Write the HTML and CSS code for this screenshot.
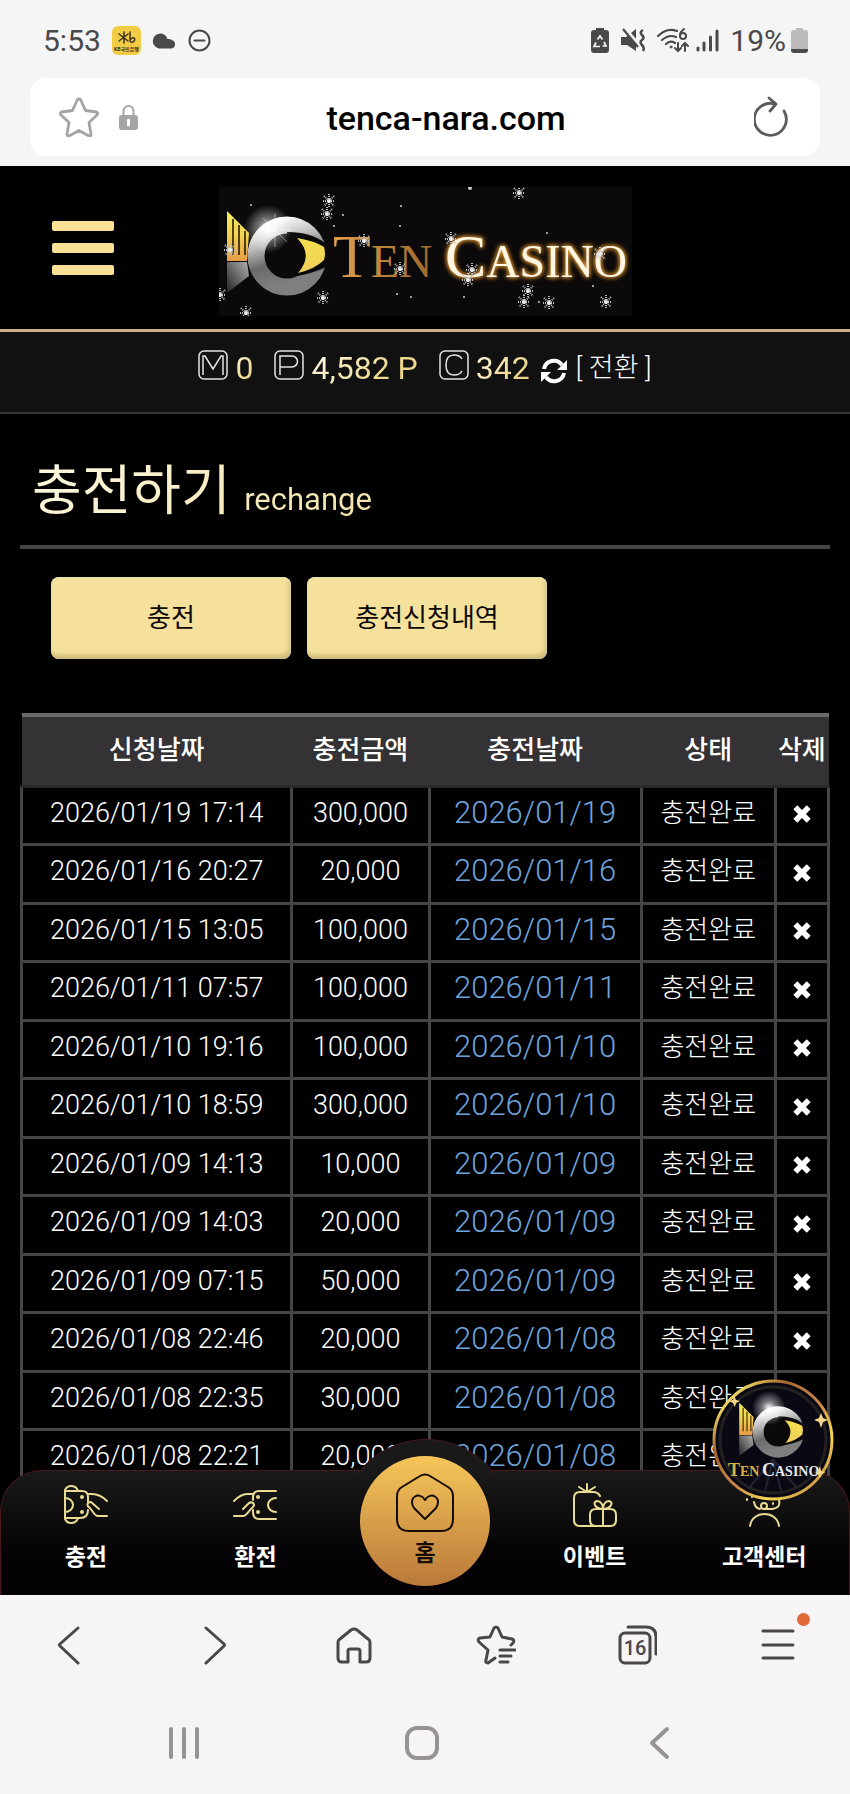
FILE: index.html
```html
<!DOCTYPE html>
<html lang="ko">
<head>
  <meta charset="UTF-8" />
  <meta name="viewport" content="width=device-width, initial-scale=1.0" />
  <title>TEN CASINO - 충전하기</title>
  <link rel="stylesheet" href="styles.css">
</head>
<body>

  <!-- status bar -->
  <div class="status-bar">
    <div class="status-left">
      <span class="clock">5:53</span>
      <svg width="29" height="29" viewBox="0 0 29 29">
        <rect width="29" height="29" rx="6" fill="#f3cc46" />
        <path d="M12 6v11M7 8l9 7M16 8l-9 7M18 6v8q0 3 3 2q3-2 1-4q-2-1-4 2" fill="none" stroke="#3a3222" stroke-width="1.5" stroke-linecap="round" />
        <text x="14.5" y="25" class="kb-text">KB국민은행</text>
      </svg>
      <svg width="25" height="17" viewBox="0 0 25 17"><path d="M7 16.500a7.500 7.500 0 1 1 8.500-9.500a6 6 0 0 1 4.500 1a4.500 4.500 0 0 1 0 8.500z" fill="#4a484a" /></svg>
      <svg class="dnd" width="23" height="23" viewBox="0 0 23 23" fill="none" stroke="#4a484a" stroke-width="2"><circle cx="11.500" cy="11.500" r="10" /><path d="M6.500 11.500h10" stroke-linecap="round" /></svg>
    </div>
    <div class="status-right">
      <svg width="18" height="25" viewBox="0 0 18 25">
        <path d="M5 0h8v2h2q3 0 3 3v17q0 3-3 3H3q-3 0-3-3V5q0-3 3-3h2z" fill="#4a484a" />
        <path d="M6.500 11.500L9 8l2.500 3.500M13 14l2 4h-3.500M9 18.500H3l2-4" fill="none" stroke="#f5f5f5" stroke-width="1.700" />
      </svg>
      <svg width="26" height="25" viewBox="0 0 26 25">
        <path d="M1 9h5L16 1v22L7 17H1z" fill="#4a484a" />
        <path d="M5 0l14 17" stroke="#f5f5f5" stroke-width="3" />
        <path d="M3 1l15 18" stroke="#4a484a" stroke-width="2.200" />
        <path d="M23 2q-4 2-1 5t0 5t0 5t1 6" fill="none" stroke="#4a484a" stroke-width="2.500" />
      </svg>
      <svg class="wifi" width="32" height="25" viewBox="0 0 32 25" fill="none" stroke="#4a484a" stroke-width="2.200" stroke-linecap="round">
        <path d="M1 8Q10-1 20 3M5 12q7-6 14-3M9 16q4-4 9-1" />
        <circle cx="14" cy="19" r="1" fill="#4a484a" stroke-width="1" />
        <circle cx="26" cy="8" r="3" stroke-width="2" /><path d="M27 1q-4 3-4 6" stroke-width="2" />
        <path d="M21 15v8M18 20l3 3 3-3M28 23v-8M25 18l3-3 3 3" stroke-width="2" />
      </svg>
      <svg width="23" height="23" viewBox="0 0 23 23" stroke="#4a484a" stroke-width="3" stroke-linecap="round"><path d="M2 19v2M8 14v7M14.500 8v13M21 2v19" /></svg>
      <span class="battery-text">19%</span>
      <svg width="17" height="25" viewBox="0 0 17 25"><path d="M5 0h7v2h2q3 0 3 3v16H0V5q0-3 3-3h2z" fill="#bcbabc" /><path d="M0 21h17v1q0 3-3 3H3q-3 0-3-3z" fill="#4a484a" /></svg>
    </div>
  </div>

  <!-- address bar -->
  <div class="address-bar">
    <button class="plain" aria-label="북마크"><svg width="40" height="40" viewBox="0 0 40 40" fill="none" stroke="#a5a3a5" stroke-width="2.800" stroke-linejoin="round"><path d="M20 2q1.500 0 2 1.500l4.500 10 11 1.500q2 1 .5 3l-8 7.500 2 12q0 2-2 1.500L20 33.500 10 39q-2 0-2-2l2-11.500L2 18q-1.500-2 .5-3l11-1.500L18 3.500Q18.500 2 20 2z" /></svg></button>
    <svg class="lock" width="19" height="26" viewBox="0 0 19 26"><path d="M4.500 12V7a5 5 0 0 1 10 0v5" fill="none" stroke="#a5a3a5" stroke-width="2" /><rect y="11" width="19" height="15" rx="3" fill="#a5a3a5" /><path d="M9.500 16v5" stroke="#fff" stroke-width="3" stroke-linecap="round" /></svg>
    <input type="text" class="url" aria-label="주소" value="tenca-nara.com" />
    <button class="plain" aria-label="새로고침"><svg width="36" height="42" viewBox="0 0 36 42" fill="none" stroke="#5c5a5c" stroke-width="2.800" stroke-linecap="round" stroke-linejoin="round"><path d="M30 15A16 16 0 1 1 21 8M15 2l7 6-6 7" /></svg></button>
  </div>

  <!-- site -->
  <div class="site">
    <header class="header">
      <button class="menu-btn" aria-label="메뉴"><span></span><span></span><span></span></button>
      <a href="#" class="logo" aria-label="TEN CASINO">
        <svg width="413" height="129" viewBox="0 0 413 129">
          <defs>
            <linearGradient id="fin" x1="0" y1="0" x2="0" y2="1"><stop offset="0" stop-color="#f5ee62" /><stop offset=".5" stop-color="#f2d24e" /><stop offset="1" stop-color="#e89a45" /></linearGradient>
            <linearGradient id="eye" x1="0" y1="0" x2="0" y2="1"><stop offset="0" stop-color="#f5e04e" /><stop offset="1" stop-color="#f0cf5c" /></linearGradient>
            <linearGradient id="ring" x1="0" y1="0" x2=".3" y2="1"><stop offset="0" stop-color="#fff" /><stop offset=".35" stop-color="#bbb" /><stop offset=".65" stop-color="#6a6a6a" /><stop offset="1" stop-color="#7f7f7f" /></linearGradient>
            <linearGradient id="tail" x1="1" y1="0" x2="0" y2="1"><stop offset="0" stop-color="#b0b0b0" /><stop offset="1" stop-color="#222" /></linearGradient>
            <linearGradient id="ten" x1="0" y1="0" x2="1" y2="0"><stop offset="0" stop-color="#e0a04c" /><stop offset="1" stop-color="#9c682c" /></linearGradient>
            <radialGradient id="shine"><stop offset="0" stop-color="#fff" /><stop offset=".4" stop-color="#fff" stop-opacity=".45" /><stop offset="1" stop-color="#fff" stop-opacity="0" /></radialGradient>
            <g id="fish">
              <path d="M8 24l22 22-2 28H8z" fill="url(#fin)" />
              <path d="M14 32v36M20 38v30M26 44v24" stroke="#2a1c08" stroke-width="1.600" />
              <path d="M8 75h20l2 14-22 17z" fill="url(#tail)" />
              <circle cx="68" cy="69" r="31" fill="#0b090a" stroke="url(#ring)" stroke-width="17" />
              <path d="M68 45q24 0 38 11l3 2v18l-4 5Q94 86 78 89z" fill="#0b090a" />
              <path d="M78 51q18 3 27 9 2 7 0 13-9 9-26 13 16-18-1-35z" fill="url(#eye)" />
            </g>
            <g id="flake">
              <path d="M0-7V7M-6 0H6M-5-5L5 5M5-5L-5 5" stroke="#bbb" stroke-width="2" stroke-dasharray="1 1" />
              <circle r="2" fill="#eee" />
            </g>
          </defs>
          <rect width="413" height="129" fill="#0b090a" />
          <use href="#fish" />
          <circle cx="49" cy="42" r="24" fill="url(#shine)" />
          <path d="M56 26v34M39 43h34M44 31l24 24M68 31L44 55" stroke="#fff" stroke-width=".600" opacity=".7" />
          <text x="114" y="90" class="logo-text" fill="url(#ten)"><tspan class="cap">T</tspan>EN</text>
          <text x="226" y="90" class="logo-text glow"><tspan class="cap">C</tspan>ASINO</text>
          <use href="#flake" x="110" y="14" /><use href="#flake" x="108" y="27" />
          <use href="#flake" x="145" y="54" /><use href="#flake" x="181" y="82" />
          <use href="#flake" x="104" y="111" /><use href="#flake" x="27" y="126" />
          <use href="#flake" x="11" y="63" /><use href="#flake" x="1" y="108" />
          <use href="#flake" x="253" y="83" /><use href="#flake" x="249" y="93" />
          <use href="#flake" x="232" y="52" /><use href="#flake" x="300" y="6" />
          <use href="#flake" x="309" y="104" /><use href="#flake" x="305" y="115" />
          <use href="#flake" x="330" y="116" /><use href="#flake" x="387" y="115" />
          <use href="#flake" x="381" y="67" />
          <g fill="#ccc"><circle cx="32" cy="18" r="1" /><circle cx="124" cy="28" r="1" /><circle cx="115" cy="39" r="1" /><circle cx="182" cy="19" r="1" /><circle cx="181" cy="39" r="1" /><circle cx="328" cy="46" r="1" /><circle cx="178" cy="107" r="1" /><circle cx="192" cy="110" r="1" /><circle cx="245" cy="110" r="1" /><circle cx="320" cy="115" r="1" /><circle cx="374" cy="99" r="1" /><circle cx="251" cy="1" r="2" /></g>
        </svg>
      </a>
    </header>

    <div class="balance">
      <div class="balance-item">
        <svg width="30" height="30" viewBox="0 0 30 30"><rect x="1" y="1" width="28" height="28" rx="5" /><path d="M5 25V6h2l8 13 8-13h2v19" /></svg>
        <span>0</span>
      </div>
      <div class="balance-item">
        <svg width="30" height="30" viewBox="0 0 30 30"><rect x="1" y="1" width="28" height="28" rx="5" /><path d="M6 25V6h12a5 5 0 0 1 0 11H6" /></svg>
        <span>4,582 P</span>
      </div>
      <div class="balance-item">
        <svg width="30" height="30" viewBox="0 0 30 30"><rect x="1" y="1" width="28" height="28" rx="5" /><path d="M23 9q-2-4-8-4-8 0-8 10t8 10q6 0 8-4" /></svg>
        <span>342</span>
      </div>
      <button class="plain convert">
        <svg width="26" height="26" viewBox="0 0 26 26" fill="none" stroke="#fff" stroke-width="4"><path d="M3 11A10 10 0 0 1 21 7M23 15A10 10 0 0 1 5 19" /><path d="M26 2v10H16zM0 24V14h10z" fill="#fff" stroke="none" /></svg>
        [ 전환 ]
      </button>
    </div>

    <main class="content">
      <h1 class="title">충전하기 <small>rechange</small></h1>

      <div class="tabs">
        <button>충전</button>
        <button>충전신청내역</button>
      </div>

      <table class="history">
        <thead>
          <tr>
            <th class="col-request">신청날짜</th>
            <th class="col-amount">충전금액</th>
            <th class="col-date">충전날짜</th>
            <th class="col-state">상태</th>
            <th class="col-delete">삭제</th>
          </tr>
        </thead>
        <tbody id="historyBody"></tbody>
      </table>
    </main>

    <nav class="bottom-nav">
      <a href="#">
        <svg width="44" height="44" viewBox="0 0 44 44"><path d="M14 8a7 7 0 0 0-13-1v29a7 7 0 0 0 13-1M1 8h17q6 0 6 6v6M1 35h15q8 0 8-8M1 15a8 7 0 0 1 0 14M24 11h4c7 0 11 3 15 7M43 33h-9c-4 0-6-7-10-10M35 26l-8-7c-4 0-5 4-1 6" /><circle cx="18" cy="14" r="1" /><circle cx="18" cy="29" r="1" /></svg>
        충전
      </a>
      <a href="#">
        <svg width="44" height="44" viewBox="0 0 44 44"><path d="M43 8H26q-6 0-6 6v3M43 36H26q-6 0-6-7v-2M43 15a8 7 0 0 0 0 14M1 18c4-4 8-7 13-7h6M1 33h9c4 0 6-6 10-9M10 26l6-6c4-2 7 2 3 5" /><circle cx="25" cy="14" r="1" /><circle cx="25" cy="29" r="1" /></svg>
        환전
      </a>
      <a href="#" class="home">
        <svg width="60" height="60" viewBox="0 0 60 60"><path d="M25 3q5-3 10 0l18 11q5 3 5 9v23q0 12-12 12H14Q2 58 2 46V23q0-6 5-9zM30 46L19 35c-7-11 6-17 11-8 5-9 18-3 11 8z" /></svg>
        홈
      </a>
      <a href="#">
        <svg width="44" height="44" viewBox="0 0 44 44"><path d="M27 13q-2-4-7-4H7q-6 0-6 6v22q0 6 6 6h30q6 0 6-6v-5q0-6-6-6H23q-6 0-6 6v5q0 6 6 6M30 26v17M30 26c-8 0-11-7-6-8 4 0 6 4 6 8 0-4 2-8 6-8 5 1 2 8-6 8M14 1v8M6 4l8 5M22 4l-8 5" /></svg>
        이벤트
      </a>
      <a href="#">
        <svg width="44" height="44" viewBox="0 0 44 44"><path d="M8 43c2-16 27-16 29 0M10 14v-2a12 12 0 0 1 24 0v2M12 19q1 6 6 7M37 17q2 8-7 9h-8" /><circle cx="22" cy="23" r="3" /><path d="M31 20v1M5 16v1" /></svg>
        고객센터
      </a>
    </nav>

    <a href="#" class="badge" aria-label="TEN CASINO">
      <svg width="122" height="122" viewBox="0 0 122 122">
        <defs>
          <linearGradient id="rim" x1="0" y1="0" x2="1" y2="1"><stop offset="0" stop-color="#8d5a2c" /><stop offset=".12" stop-color="#f7e468" /><stop offset=".3" stop-color="#a8662f" /><stop offset=".55" stop-color="#c98a4a" /><stop offset=".72" stop-color="#f6d858" /><stop offset="1" stop-color="#b36c36" /></linearGradient>
        </defs>
        <circle cx="61" cy="61" r="59" fill="#0a0913" stroke="url(#rim)" stroke-width="3" />
        <circle cx="61" cy="61" r="53" fill="none" stroke="#232022" stroke-width="3" />
        <path d="M61 80L38 108M61 80l-8 32M61 80l8 32M61 80l23 28" stroke="#6b7196" stroke-width="2" opacity=".25" />
        <svg x="22" y="8" width="84" height="84" viewBox="0 0 129 129"><use href="#fish" /></svg>
        <circle cx="57" cy="29" r="17" fill="url(#shine)" />
        <text x="16" y="97" class="badge-text" fill="#d8b247"><tspan class="cap">T</tspan>EN</text>
        <text x="50" y="97" class="badge-text" fill="#e8e8ee"><tspan class="cap">C</tspan>ASINO</text>
        <path d="M109 34l2 5 5 2-5 2-2 6-2-6-5-2 5-2zM22 16l2 5 4 1-4 2-1 4-2-4-4-2 4-1zM108 87l1 5 5 1-5 2-1 4-2-4-3-2 3-1z" fill="#f8d888" />
      </svg>
    </a>
  </div>

  <!-- browser toolbar -->
  <div class="toolbar">
    <button class="plain" aria-label="뒤로"><svg width="40" height="40" viewBox="0 0 40 40"><path d="M26 3L8 19q-1 1 0 2l18 17" /></svg></button>
    <button class="plain" aria-label="앞으로"><svg width="40" height="40" viewBox="0 0 40 40"><path d="M13 3l18 16q1 1 0 2L13 38" /></svg></button>
    <button class="plain" aria-label="홈"><svg width="40" height="40" viewBox="0 0 40 40"><path d="M17 5q3-2 6 0l11 9q2 1 2 4v15q0 4-4 4h-6V26q0-2-2-2h-8q-2 0-2 2v11H8q-4 0-4-4V18q0-3 2-4z" /></svg></button>
    <button class="plain" aria-label="북마크 목록"><svg width="40" height="40" viewBox="0 0 40 40"><path d="M19 33l-7 5q-3 0-2-3l2-10-9-8q-2-3 1-4l10-1 4-9q2-2 4 0l4 9 10 2q3 1 1 4l-2 2M24 25h15M24 31h11M24 37h8" /></svg></button>
    <button class="plain" aria-label="탭 16개"><svg width="40" height="40" viewBox="0 0 40 40"><path d="M11 2h18q10 0 10 10v17" /><rect x="3" y="8" width="30" height="30" rx="5" /><text x="18" y="30" class="tab-count">16</text></svg></button>
    <button class="plain more" aria-label="메뉴 더보기"><svg width="40" height="40" viewBox="0 0 40 40"><path d="M5 6h30M5 20h30M5 33h30" /></svg></button>
  </div>

  <!-- system navigation -->
  <div class="system-nav">
    <button class="plain" aria-label="최근 앱"><svg width="36" height="36" viewBox="0 0 36 36"><path d="M5 4v28M18 4v28M31 4v28" /></svg></button>
    <button class="plain" aria-label="홈 화면"><svg width="36" height="36" viewBox="0 0 36 36"><rect x="3" y="3" width="30" height="30" rx="10" /></svg></button>
    <button class="plain" aria-label="이전"><svg width="36" height="36" viewBox="0 0 36 36"><path d="M25 4L10 18l15 14" /></svg></button>
  </div>

  <script>
    const rows = [
      ["2026/01/19 17:14", "300,000"],
      ["2026/01/16 20:27", "20,000"],
      ["2026/01/15 13:05", "100,000"],
      ["2026/01/11 07:57", "100,000"],
      ["2026/01/10 19:16", "100,000"],
      ["2026/01/10 18:59", "300,000"],
      ["2026/01/09 14:13", "10,000"],
      ["2026/01/09 14:03", "20,000"],
      ["2026/01/09 07:15", "50,000"],
      ["2026/01/08 22:46", "20,000"],
      ["2026/01/08 22:35", "30,000"],
      ["2026/01/08 22:21", "20,000"]
    ];

    document.getElementById("historyBody").innerHTML = rows.map(([requested, amount]) => `
      <tr>
        <td>${requested}</td>
        <td>${amount}</td>
        <td class="date">${requested.split(" ")[0]}</td>
        <td class="state">충전완료</td>
        <td><button class="plain" aria-label="삭제"><svg width="20" height="20" viewBox="0 0 18 18"><path d="M3 3l12 12M15 3L3 15" stroke="#fff" stroke-width="5" /></svg></button></td>
      </tr>`).join("");
  </script>

</body>
</html>
```
FILE: styles.css
```css
* { margin: 0; padding: 0; box-sizing: border-box; }
body {
  font-family: Roboto, "Noto Sans CJK KR", sans-serif;
  background-color: #f5f5f5;
  height: 100vh;
  display: flex;
  flex-direction: column;
}
svg { display: block; flex-shrink: 0; }
a { color: inherit; text-decoration: none; }
.plain {
  background: none;
  border: none;
  color: inherit;
  font: inherit;
  cursor: pointer;
}

/* status bar */
.status-bar {
  height: 78px;
  padding: 2px 42px 0 43px;
  display: flex;
  justify-content: space-between;
  align-items: center;
  color: #4a484a;
  font-size: 30px;
}
.status-left,
.status-right {
  display: flex;
  align-items: center;
  gap: 11px;
}
.wifi { margin-right: -4px; }
.battery-text { margin-right: -6px; }
.kb-text {
  font-size: 5px;
  font-weight: bold;
  text-anchor: middle;
  fill: #3a3222;
}

/* address bar */
.address-bar {
  height: 78px;
  margin: 0 30px 10px;
  padding: 0 30px 0 29px;
  border-radius: 16px;
  background-color: #fff;
  display: flex;
  align-items: center;
}
.lock { margin-left: 20px; }
.url {
  flex: 1;
  min-width: 0;
  padding-top: 2px;
  border: none;
  outline: none;
  background: none;
  text-align: center;
  font-family: inherit;
  font-size: 34px;
  font-weight: 500;
}

/* site */
.site {
  flex: 1;
  min-height: 0;
  overflow: hidden;
  position: relative;
  background-color: #000;
  color: #fff;
}
.header {
  height: 166px;
  padding: 0 52px;
  display: grid;
  grid-template-columns: 1fr auto 1fr;
  align-items: center;
  border-bottom: 3px solid #c9b184;
  background-color: #000;
}
.menu-btn {
  width: 62px;
  display: flex;
  flex-direction: column;
  gap: 12px;
  background: none;
  border: none;
  cursor: pointer;
}
.menu-btn span {
  height: 10px;
  border-radius: 2px;
  background-color: #f8e197;
}
.logo { margin-top: 8px; }
.logo-text {
  font-family: "Liberation Serif", serif;
  font-size: 46px;
}
.logo-text .cap { font-size: 62px; }
.glow {
  fill: #fff6e4;
  filter: drop-shadow(0 0 2px #e8a23c) drop-shadow(0 0 2px #b8741e);
}

.balance {
  height: 82px;
  padding-bottom: 8px;
  display: flex;
  justify-content: center;
  align-items: center;
  gap: 21px;
  background-color: #121112;
  border-bottom: 2px solid #363436;
  font-size: 32px;
  line-height: 36px;
}
.balance-item {
  display: flex;
  align-items: center;
  gap: 7px;
}
.balance-item svg {
  margin-bottom: 6px;
  fill: none;
  stroke: #e4e4e4;
  stroke-width: 1.5;
}
.balance-item span,
.title {
  background: linear-gradient(135deg, #fffbe8, #f0dc98 60%, #e8cf82);
  -webkit-background-clip: text;
  background-clip: text;
  color: transparent;
}
.convert {
  margin-left: -10px;
  display: flex;
  align-items: center;
  gap: 9px;
  font-size: 27px;
  font-weight: 300;
}
.convert svg { margin-top: 5px; }

.content { padding: 0 20px; }
.title {
  height: 135px;
  padding: 40px 0 0 12px;
  border-bottom: 4px solid #464446;
  font-size: 54px;
  font-weight: 400;
  line-height: 76px;
}
.title small { font-size: 31px; }
.tabs {
  padding: 28px 31px 54px;
  display: flex;
  gap: 16px;
}
.tabs button {
  width: 240px;
  height: 82px;
  padding-bottom: 6px;
  border: none;
  border-radius: 8px;
  background-color: #f5e19b;
  box-shadow: inset 0 2px 3px #e9e4a8, inset -2px -4px 4px #cdb97c;
  color: #0c0808;
  font-family: inherit;
  font-size: 26px;
  cursor: pointer;
}

.history {
  width: 100%;
  table-layout: fixed;
  border-collapse: collapse;
  text-align: center;
  font-size: 27px;
  font-weight: 300;
}
.history th {
  height: 71px;
  padding-bottom: 6px;
  border-top: 4px solid #6c6a6c;
  border-bottom: 3px solid #2a282a;
  background-color: #343234;
  font-size: 26px;
  font-weight: 500;
  white-space: nowrap;
}
.history td {
  height: 58px;
  padding-bottom: 5px;
  border: 3px solid #464446;
  line-height: 36px;
}
.history tr:nth-child(even) td { height: 59px; }
.history .date {
  color: #6fa3dc;
  font-size: 31px;
}
.history .state { font-size: 26px; }
.history .plain { vertical-align: middle; }
.col-request { width: 33.5%; }
.col-amount { width: 17%; }
.col-date { width: 26.3%; }
.col-state { width: 16.6%; }
.col-delete { width: 6.6%; }

/* bottom menu, fixed over the list */
.bottom-nav {
  position: absolute;
  left: 0;
  right: 0;
  bottom: 0;
  height: 125px;
  display: grid;
  grid-template-columns: repeat(5, 1fr);
  border: 1px solid #4a1a1c;
  border-bottom: none;
  border-radius: 42px 42px 0 0;
  background: linear-gradient(#1a1919, #040204 70%);
}
/* raised part behind the home button */
.bottom-nav::before {
  content: "";
  position: absolute;
  left: 50%;
  top: -32px;
  width: 170px;
  height: 170px;
  margin-left: -85px;
  border: 1px solid #4a1a1c;
  border-radius: 50%;
  background-color: #1a1919;
  clip-path: inset(0 0 137px 0);
}
.bottom-nav a {
  padding-top: 12px;
  display: flex;
  flex-direction: column;
  align-items: center;
  gap: 14px;
  font-size: 23px;
  font-weight: 700;
  line-height: 34px;
}
.bottom-nav svg {
  fill: none;
  stroke: #eadb92;
  stroke-width: 2;
  stroke-linecap: round;
  stroke-linejoin: round;
}
.bottom-nav .home {
  position: relative;
  justify-self: center;
  width: 130px;
  height: 130px;
  margin-top: -15px;
  padding-top: 17px;
  gap: 4px;
  border-radius: 50%;
  background: linear-gradient(#f6c65a, #b9793a);
  color: #160c04;
}
.bottom-nav .home svg { stroke: #160c04; }

.badge {
  position: absolute;
  right: 16px;
  bottom: 94px;
  border-radius: 50%;
}
.badge-text {
  font-family: "Liberation Serif", serif;
  font-size: 14px;
  font-weight: bold;
}
.badge-text .cap { font-size: 18px; }

/* browser toolbar */
.toolbar {
  height: 99px;
  padding: 0 1px;
  display: grid;
  grid-template-columns: repeat(6, 1fr);
  justify-items: center;
  align-items: center;
  background-color: #f7f4f6;
}
.toolbar svg {
  fill: none;
  stroke: #4a464a;
  stroke-width: 3;
  stroke-linecap: round;
  stroke-linejoin: round;
}
.toolbar .tab-count {
  fill: #4a464a;
  stroke: none;
  font-size: 20px;
  font-weight: 500;
  text-anchor: middle;
}
.more { position: relative; }
.more::after {
  content: "";
  position: absolute;
  top: -12px;
  right: -12px;
  width: 13px;
  height: 13px;
  border-radius: 50%;
  background-color: #df6a38;
}
.system-nav {
  height: 100px;
  padding: 0 71px 2px 65px;
  display: grid;
  grid-template-columns: repeat(3, 1fr);
  justify-items: center;
  align-items: center;
  background-color: #f7f4f6;
}
.system-nav svg {
  fill: none;
  stroke: #969296;
  stroke-width: 4;
  stroke-linecap: round;
  stroke-linejoin: round;
}
```
